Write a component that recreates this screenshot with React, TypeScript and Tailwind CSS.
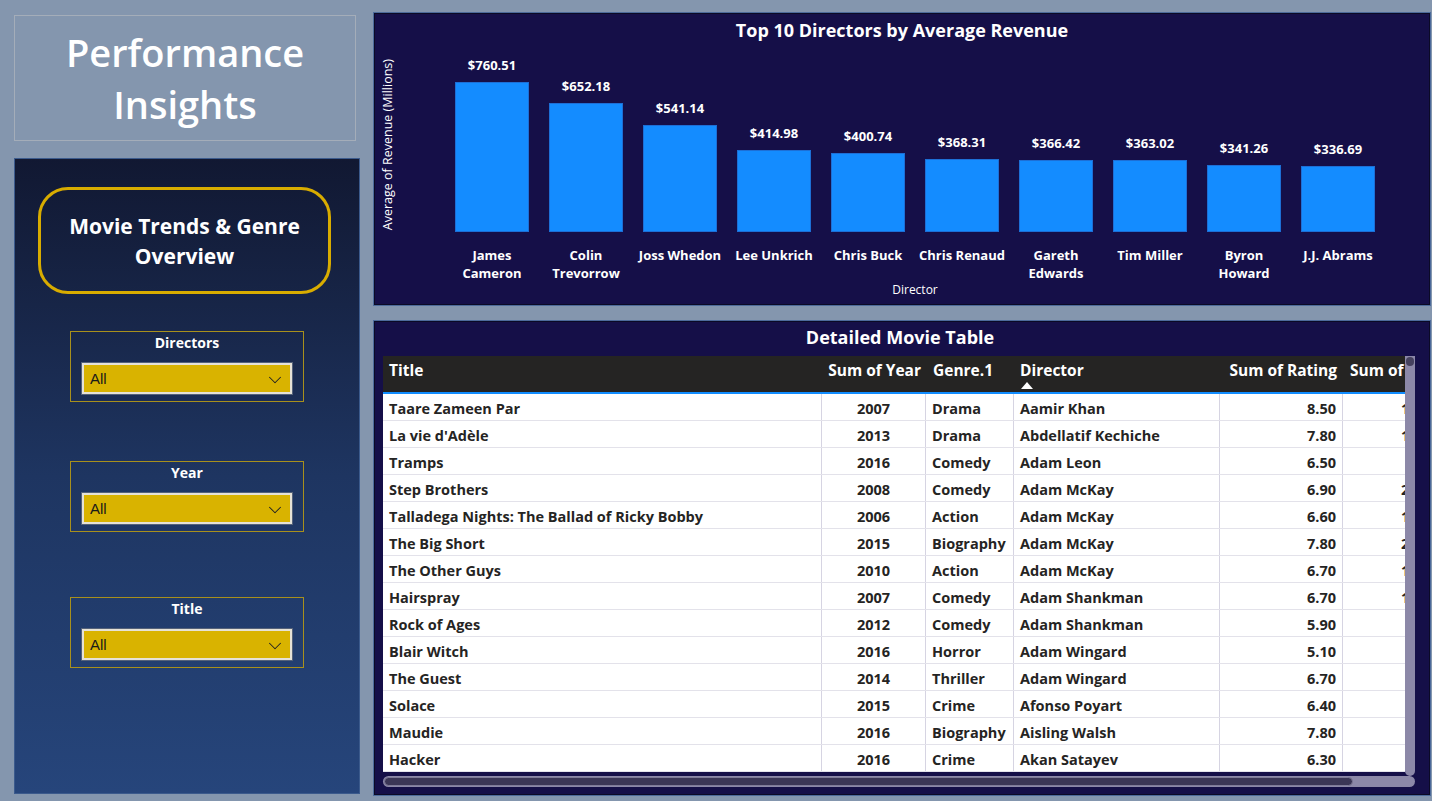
import { ChevronDown } from "lucide-react";

const directors = [
  { name: ["James", "Cameron"], value: 760.51 },
  { name: ["Colin", "Trevorrow"], value: 652.18 },
  { name: ["Joss Whedon"], value: 541.14 },
  { name: ["Lee Unkrich"], value: 414.98 },
  { name: ["Chris Buck"], value: 400.74 },
  { name: ["Chris Renaud"], value: 368.31 },
  { name: ["Gareth", "Edwards"], value: 366.42 },
  { name: ["Tim Miller"], value: 363.02 },
  { name: ["Byron", "Howard"], value: 341.26 },
  { name: ["J.J. Abrams"], value: 336.69 },
];

const movies = [
  ["Taare Zameen Par", "2007", "Drama", "Aamir Khan", "8.50", "102,697"],
  ["La vie d'Adèle", "2013", "Drama", "Abdellatif Kechiche", "7.80", "103,150"],
  ["Tramps", "2016", "Comedy", "Adam Leon", "6.50", "1,236"],
  ["Step Brothers", "2008", "Comedy", "Adam McKay", "6.90", "223,065"],
  ["Talladega Nights: The Ballad of Ricky Bobby", "2006", "Action", "Adam McKay", "6.60", "137,502"],
  ["The Big Short", "2015", "Biography", "Adam McKay", "7.80", "246,360"],
  ["The Other Guys", "2010", "Action", "Adam McKay", "6.70", "177,380"],
  ["Hairspray", "2007", "Comedy", "Adam Shankman", "6.70", "102,954"],
  ["Rock of Ages", "2012", "Comedy", "Adam Shankman", "5.90", "64,513"],
  ["Blair Witch", "2016", "Horror", "Adam Wingard", "5.10", "26,088"],
  ["The Guest", "2014", "Thriller", "Adam Wingard", "6.70", "71,069"],
  ["Solace", "2015", "Crime", "Afonso Poyart", "6.40", "25,007"],
  ["Maudie", "2016", "Biography", "Aisling Walsh", "7.80", "346"],
  ["Hacker", "2016", "Crime", "Akan Satayev", "6.30", "3,799"],
];

const font = "font-['Open_Sans','Noto_Sans',sans-serif]";

function Slicer({ label }: { label: string }) {
  return (
    <div className="mx-auto w-[234px] border border-[#a8901c] pb-[7px]">
      <div className="pt-[1px] text-center text-[14px] font-bold leading-[20px] text-white">{label}</div>
      <div className="mx-auto mt-[10px] flex h-[31px] w-[210px] items-center justify-between border-2 border-[#e6e2d6] bg-[#d9b300] pl-[6px] pr-[4px] pt-[2px] outline outline-1 outline-[#55627a]">
        <span className="font-['Liberation_Sans',sans-serif] text-[15px] text-[#1a1a1a]">All</span>
        <ChevronDown size={22} strokeWidth={1.1} className="text-[#222]" />
      </div>
    </div>
  );
}

function Chart() {
  const scale = 150 / 760.51;
  return (
    <div className="h-[292px] border border-[#0b0a26] bg-[#150f48] outline outline-1 outline-[#4d6b9b]">
      <h2 className="pt-[4px] text-center text-[18px] font-bold leading-[24px] text-white">
        Top 10 Directors by Average Revenue
      </h2>
      <div className="flex">
        <div className="flex h-[206px] w-[26px] items-center justify-center">
          <span className="rotate-180 text-[12.5px] leading-[14px] whitespace-nowrap text-white [writing-mode:vertical-rl]">
            Average of Revenue (Millions)
          </span>
        </div>
        <div className="ml-[44px]">
          <div className="grid grid-cols-[repeat(10,94px)]">
            {directors.map((d) => (
              <div key={d.value} className="flex flex-col items-center">
                <div className="flex h-[190px] flex-col items-center justify-end">
                  <span className="mb-[9px] text-[13px] font-bold leading-[16px] text-white">
                    ${d.value.toFixed(2)}
                  </span>
                  <div className="w-[74px] border border-[#1d6fd6] bg-[#148cff]" style={{ height: d.value * scale }} />
                </div>
                <div className="mt-[14px] text-center text-[13px] font-bold leading-[18px] text-white">
                  {d.name.map((n) => (
                    <div key={n} className="whitespace-nowrap">{n}</div>
                  ))}
                </div>
              </div>
            ))}
          </div>
          <div className="text-center text-[12px] leading-[16px] text-white">Director</div>
        </div>
      </div>
    </div>
  );
}

const cols = [
  { w: "w-[439px]", align: "text-left pl-[6px]" },
  { w: "w-[104px]", align: "text-center" },
  { w: "w-[88px]", align: "text-left pl-[6px]" },
  { w: "w-[206px]", align: "text-left pl-[6px]" },
  { w: "w-[123px]", align: "text-right pr-[6px]" },
  { w: "w-[119px]", align: "text-right pr-[6px]" },
];

function MovieTable() {
  return (
    <div className="flex h-[474px] flex-col border border-[#0b0a26] bg-[#150f48] pl-[8px] pr-[12px] outline outline-1 outline-[#4d6b9b]">
      <h2 className="pt-[3px] text-center text-[18px] font-bold leading-[24px] text-white">
        Detailed Movie Table
      </h2>
      <div className="mt-[7px] w-[1032px]">
        <div className="flex">
          <div className="h-[418px] w-[1022px] overflow-hidden">
            <div className="flex h-[38px] w-max border-b-2 border-[#118dff] bg-[#252423] text-[15.5px] font-bold leading-[20px] text-white">
              <div className="w-[439px] pl-[6px] pt-[4px]">Title</div>
              <div className="w-[104px] pr-[5px] pt-[4px] text-right whitespace-nowrap">Sum of Year</div>
              <div className="w-[88px] pl-[7px] pt-[4px]">Genre.1</div>
              <div className="flex w-[206px] flex-col pl-[6px] pt-[4px]">
                <span>Director</span>
                <svg width="12" height="7" viewBox="0 0 12 7" className="ml-[1px] mt-[2px]">
                  <path d="M0 7 L6 0 L12 7 Z" fill="#fff" />
                </svg>
              </div>
              <div className="w-[123px] pr-[6px] pt-[4px] text-right whitespace-nowrap">Sum of Rating</div>
              <div className="w-[119px] pl-[7px] pt-[4px] whitespace-nowrap">Sum of Votes</div>
            </div>
            {movies.map((m) => (
              <div key={m[0]} className="flex h-[27px] w-max border-b border-[#e3e2ea] bg-white text-[14.5px] font-bold leading-[23px] text-[#252423]">
                {m.map((c, i) => (
                  <div
                    key={i}
                    className={`${cols[i].w} ${cols[i].align} whitespace-nowrap border-r border-[#d6d4e2] pt-[3px]`}
                  >
                    {c}
                  </div>
                ))}
              </div>
            ))}
          </div>
          <div className="relative h-[420px] w-[10px] rounded-b-full bg-[#8c88a8]">
            <div className="absolute left-[1px] top-[1px] h-[9px] w-[8px] rounded-full bg-[#45415e]" />
          </div>
        </div>
        <div className="h-[11px] w-[1032px] rounded-full bg-[#8c88a8] p-[1px]">
          <div className="h-[9px] w-[969px] rounded-full border border-[#7f7b98] bg-[#3b3656]" />
        </div>
      </div>
    </div>
  );
}

export default function App() {
  return (
    <div className={`${font} flex h-[801px] w-[1432px] gap-[14px] overflow-hidden bg-[#8496ae] pl-[14px] pt-[13px]`}>
      <div className="flex w-[346px] flex-col">
        <div className="mt-[2px] flex h-[126px] w-[342px] flex-col items-center justify-center border border-[#a4adb9] text-[38px] font-semibold leading-[52px] text-white">
          <span>Performance</span>
          <span>Insights</span>
        </div>
        <div className="mt-[17px] h-[636px] border border-[#3b5a8c] bg-linear-to-b from-[#111832] via-[#1e3561] to-[#26457b] pt-[28px]">
          <div className="ml-[23px] flex h-[107px] w-[293px] flex-col items-center justify-center rounded-[30px] border-[3px] border-[#d8ac00] text-[21px] font-bold leading-[30px] text-white">
            <span>Movie Trends &amp; Genre</span>
            <span>Overview</span>
          </div>
          <div className="mt-[37px]">
            <Slicer label="Directors" />
          </div>
          <div className="mt-[59px]">
            <Slicer label="Year" />
          </div>
          <div className="mt-[65px]">
            <Slicer label="Title" />
          </div>
        </div>
      </div>
      <div className="flex w-[1056px] flex-col gap-[16px]">
        <Chart />
        <MovieTable />
      </div>
    </div>
  );
}
